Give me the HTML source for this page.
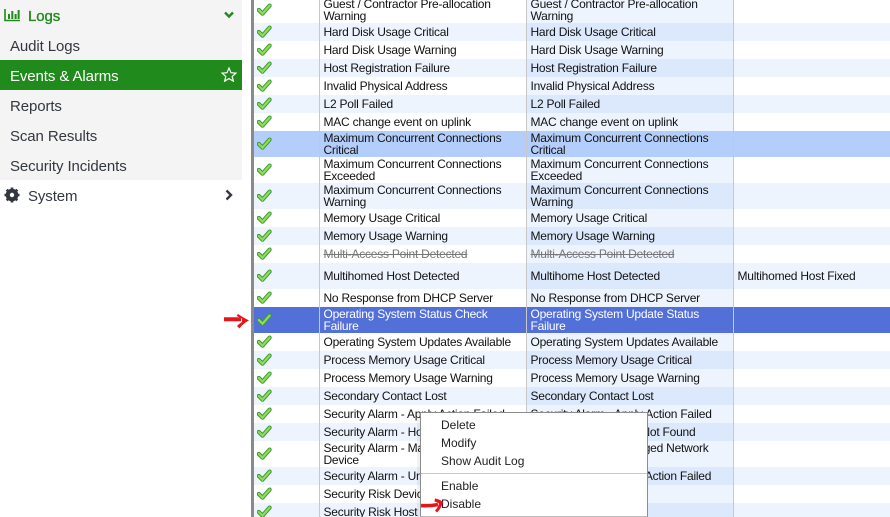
<!DOCTYPE html>
<html><head><meta charset="utf-8"><style>
html,body{margin:0;padding:0;width:890px;height:517px;overflow:hidden;background:#fff;font-family:"Liberation Sans",sans-serif}
#wrap{position:absolute;left:0;top:0;width:890px;height:517px;overflow:hidden}
#side{position:absolute;left:0;top:0;width:242px;height:180px;background:#f4f4f4}
.s{position:absolute;left:10px;font-size:15px;line-height:30px;height:30px;color:#33373f;white-space:nowrap;letter-spacing:-.1px;margin-top:2px}
#sel{position:absolute;left:0;top:60px;width:242px;height:30px;background:#208a1c}
#bar{position:absolute;left:251px;top:0;width:3px;height:517px;background:#8a8a8a}
table{position:absolute;left:254px;top:-3px;width:636px;border-collapse:collapse;table-layout:fixed;font-size:12px;line-height:12px;color:#111;letter-spacing:-.23px}
td{padding:0 3px 0 4px;height:18px;box-sizing:border-box;vertical-align:middle;white-space:nowrap;overflow:hidden}
td:nth-child(2),td:nth-child(3),td:nth-child(4){border-left:1px solid #c8c8c8}
td:nth-child(1){padding:0;position:relative}
tr{background:#fff}
td:nth-child(3){background:#eef4fe}
tr.b{background:#eef4fe}
tr.b td:nth-child(3){background:#dce8fb}
tr.l{background:#b3cefb}
tr.l td:nth-child(3){background:#b3cefb}
tr.d{background:#5270d8;color:#fff}
tr.d td:nth-child(3){background:#5270d8}
tr.t{height:26px}
tr.t td{height:26px}
tr.x td:nth-child(2),tr.x td:nth-child(3){text-decoration:line-through;color:#777}
svg.c{position:absolute;left:3px;top:50%;margin-top:-8px;width:15px;height:15px;display:block}
#menu{position:absolute;left:420px;top:412px;width:228px;height:105px;box-sizing:border-box;background:#fff;border:1px solid #8c8c8c;border-bottom:1px solid #bbb;font-size:12px;color:#222;box-shadow:-3px 0 0 rgba(0,0,0,.05)}
#menu div{position:absolute;left:20px;line-height:18px;white-space:nowrap}
#menu hr{position:absolute;left:0;right:0;top:60px;margin:0;border:0;height:1px;background:#c8c8c8}
</style></head><body>
<div id="wrap">
<svg width="0" height="0" style="position:absolute"><defs><g id="k"><path d="M1.8 8L5.5 11.6L12.6 3.6" fill="none" stroke="#3d9a2e" stroke-width="4.2" stroke-linejoin="round" stroke-linecap="round"/><path d="M1.8 8L5.5 11.6L12.6 3.6" fill="none" stroke="#8ddc62" stroke-width="2.2" stroke-linejoin="miter" stroke-linecap="round"/></g></defs></svg>
<div id="side"></div>
<div id="sel"></div>
<svg style="position:absolute;left:4px;top:8px" width="16" height="14" viewBox="0 0 16 14"><path d="M1 1V12.5H16" fill="none" stroke="#208a1c" stroke-width="1.6"/><path d="M4 6h2v5H4zM7.3 3h2v8h-2zM10.6 6h2v5h-2zM13.6 2h2v9h-2z" fill="#208a1c"/></svg>
<div class="s" style="left:28px;top:0;color:#208a1c;-webkit-text-stroke:.35px #208a1c">Logs</div>
<svg style="position:absolute;left:223px;top:10px" width="12" height="10" viewBox="0 0 12 10"><path d="M2 2.5L6 6.5L10 2.5" fill="none" stroke="#208a1c" stroke-width="2.4"/></svg>
<div class="s" style="top:30px">Audit Logs</div>
<div class="s" style="top:60px;color:#fff">Events &amp; Alarms</div>
<svg style="position:absolute;left:221px;top:67px" width="16" height="15" viewBox="0 0 16 15"><path d="M8 1L10 5.7L15 6.1L11.2 9.4L12.4 14.2L8 11.6L3.6 14.2L4.8 9.4L1 6.1L6 5.7Z" fill="none" stroke="#fff" stroke-width="1.2"/></svg>
<div class="s" style="top:90px">Reports</div>
<div class="s" style="top:120px">Scan Results</div>
<div class="s" style="top:150px">Security Incidents</div>
<svg style="position:absolute;left:4px;top:187px" width="16" height="16" viewBox="0 0 16 16"><circle cx="8" cy="8" r="4.6" fill="none" stroke="#33373f" stroke-width="3.4"/><path d="M8 0.5V15.5M0.5 8H15.5M2.7 2.7L13.3 13.3M13.3 2.7L2.7 13.3" stroke="#33373f" stroke-width="2.6"/><circle cx="8" cy="8" r="2.2" fill="#fff"/></svg>
<div class="s" style="left:28px;top:180px">System</div>
<svg style="position:absolute;left:224px;top:189px" width="10" height="12" viewBox="0 0 10 12"><path d="M2.5 1.5L7 6L2.5 10.5" fill="none" stroke="#33373f" stroke-width="2.4"/></svg>
<div id="bar"></div>
<table><colgroup><col style="width:65px"><col style="width:207px"><col style="width:207px"><col></colgroup>
<tr class="t"><td><svg class="c"><use href="#k"/></svg></td><td>Guest / Contractor Pre-allocation<br>Warning</td><td>Guest / Contractor Pre-allocation<br>Warning</td><td></td></tr>
<tr class="b"><td><svg class="c"><use href="#k"/></svg></td><td>Hard Disk Usage Critical</td><td>Hard Disk Usage Critical</td><td></td></tr>
<tr><td><svg class="c"><use href="#k"/></svg></td><td>Hard Disk Usage Warning</td><td>Hard Disk Usage Warning</td><td></td></tr>
<tr class="b"><td><svg class="c"><use href="#k"/></svg></td><td>Host Registration Failure</td><td>Host Registration Failure</td><td></td></tr>
<tr><td><svg class="c"><use href="#k"/></svg></td><td>Invalid Physical Address</td><td>Invalid Physical Address</td><td></td></tr>
<tr class="b"><td><svg class="c"><use href="#k"/></svg></td><td>L2 Poll Failed</td><td>L2 Poll Failed</td><td></td></tr>
<tr><td><svg class="c"><use href="#k"/></svg></td><td>MAC change event on uplink</td><td>MAC change event on uplink</td><td></td></tr>
<tr class="l t"><td><svg class="c"><use href="#k"/></svg></td><td>Maximum Concurrent Connections<br>Critical</td><td>Maximum Concurrent Connections<br>Critical</td><td></td></tr>
<tr class="t"><td><svg class="c"><use href="#k"/></svg></td><td>Maximum Concurrent Connections<br>Exceeded</td><td>Maximum Concurrent Connections<br>Exceeded</td><td></td></tr>
<tr class="b t"><td><svg class="c"><use href="#k"/></svg></td><td>Maximum Concurrent Connections<br>Warning</td><td>Maximum Concurrent Connections<br>Warning</td><td></td></tr>
<tr><td><svg class="c"><use href="#k"/></svg></td><td>Memory Usage Critical</td><td>Memory Usage Critical</td><td></td></tr>
<tr class="b"><td><svg class="c"><use href="#k"/></svg></td><td>Memory Usage Warning</td><td>Memory Usage Warning</td><td></td></tr>
<tr class="x"><td><svg class="c"><use href="#k"/></svg></td><td>Multi-Access Point Detected</td><td>Multi-Access Point Detected</td><td></td></tr>
<tr class="b t"><td><svg class="c"><use href="#k"/></svg></td><td>Multihomed Host Detected</td><td>Multihome Host Detected</td><td>Multihomed Host Fixed</td></tr>
<tr><td><svg class="c"><use href="#k"/></svg></td><td>No Response from DHCP Server</td><td>No Response from DHCP Server</td><td></td></tr>
<tr class="d t"><td><svg class="c"><use href="#k"/></svg></td><td>Operating System Status Check<br>Failure</td><td>Operating System Update Status<br>Failure</td><td></td></tr>
<tr><td><svg class="c"><use href="#k"/></svg></td><td>Operating System Updates Available</td><td>Operating System Updates Available</td><td></td></tr>
<tr class="b"><td><svg class="c"><use href="#k"/></svg></td><td>Process Memory Usage Critical</td><td>Process Memory Usage Critical</td><td></td></tr>
<tr><td><svg class="c"><use href="#k"/></svg></td><td>Process Memory Usage Warning</td><td>Process Memory Usage Warning</td><td></td></tr>
<tr class="b"><td><svg class="c"><use href="#k"/></svg></td><td>Secondary Contact Lost</td><td>Secondary Contact Lost</td><td></td></tr>
<tr><td><svg class="c"><use href="#k"/></svg></td><td>Security Alarm - Apply Action Failed</td><td>Security Alarm - Apply Action Failed</td><td></td></tr>
<tr class="b"><td><svg class="c"><use href="#k"/></svg></td><td>Security Alarm - Host Not Found</td><td>Security Alarm - Host Not Found</td><td></td></tr>
<tr class="t"><td><svg class="c"><use href="#k"/></svg></td><td>Security Alarm - Managed Network<br>Device</td><td>Security Alarm - Managed Network<br>Device</td><td></td></tr>
<tr class="b"><td><svg class="c"><use href="#k"/></svg></td><td>Security Alarm - Undo Action Failed</td><td>Security Alarm - Undo Action Failed</td><td></td></tr>
<tr><td><svg class="c"><use href="#k"/></svg></td><td>Security Risk Device</td><td></td><td></td></tr>
<tr class="b"><td><svg class="c"><use href="#k"/></svg></td><td>Security Risk Host</td><td></td><td></td></tr>
</table>
<svg style="position:absolute;left:223px;top:312px" width="28" height="19" viewBox="0 0 28 19"><path d="M1 7.2L18 7.2" fill="none" stroke="#e8141c" stroke-width="4"/><path d="M15 2C18 4 22 6.5 26 8.5C22 10.5 19 13 16.5 16.5L14 14C16 12 17.5 11 19 10L19 6.5C17 5.5 15.5 5 13.5 4Z" fill="#e8141c"/></svg>
<div id="menu">
<div style="top:3px">Delete</div>
<div style="top:21px">Modify</div>
<div style="top:39px">Show Audit Log</div>
<hr>
<div style="top:64px">Enable</div>
<div style="top:82px">Disable</div>
</div>
<svg style="position:absolute;left:420px;top:496px" width="25" height="20" viewBox="0 0 25 20"><path d="M1 9.6C7 10 12 9.6 18 8.6" fill="none" stroke="#e8141c" stroke-width="3.6"/><path d="M15 2.4C18 3 21 4.4 23 6C22 10 20 13.5 17 16.5L15 14.5C17 12.5 18.5 10 19 7.5C17.5 6.5 16 6 14.5 5.5Z" fill="#e8141c"/></svg>
</div>
</body></html>
